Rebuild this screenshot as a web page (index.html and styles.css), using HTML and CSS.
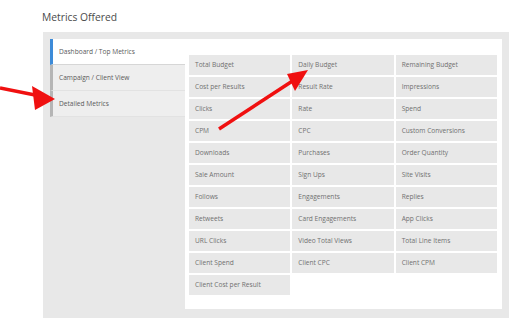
FILE: index.html
```html
<!DOCTYPE html>
<html>

<head>
    <meta charset="UTF-8" />
    <title>Metrics Offered</title>
    <link rel="stylesheet" href="styles.css">
</head>

<body>
    <h1 class="heading">Metrics Offered</h1>
    <div class="panel">
        <ul class="tabs">
            <li class="tab active">Dashboard / Top Metrics</li>
            <li class="tab">Campaign / Client View</li>
            <li class="tab">Detailed Metrics</li>
        </ul>
        <div class="content">
            <ul class="metrics">
                <li>Total Budget</li>
                <li>Daily Budget</li>
                <li>Remaining Budget</li>
                <li>Cost per Results</li>
                <li>Result Rate</li>
                <li>Impressions</li>
                <li>Clicks</li>
                <li>Rate</li>
                <li>Spend</li>
                <li>CPM</li>
                <li>CPC</li>
                <li>Custom Conversions</li>
                <li>Downloads</li>
                <li>Purchases</li>
                <li>Order Quantity</li>
                <li>Sale Amount</li>
                <li>Sign Ups</li>
                <li>Site Visits</li>
                <li>Follows</li>
                <li>Engagements</li>
                <li>Replies</li>
                <li>Retweets</li>
                <li>Card Engagements</li>
                <li>App Clicks</li>
                <li>URL Clicks</li>
                <li>Video Total Views</li>
                <li>Total Line Items</li>
                <li>Client Spend</li>
                <li>Client CPC</li>
                <li>Client CPM</li>
                <li>Client Cost per Result</li>
            </ul>
        </div>
    </div>

    <!-- annotation arrows drawn over the screenshot -->
    <svg class="arrows" width="531" height="324" viewBox="0 0 531 324">
        <line x1="0" y1="88" x2="40" y2="96" stroke="#f01010" stroke-width="3.5" />
        <polygon points="55,99 32,86 35,110" fill="#f01010" />
        <line x1="219" y1="129" x2="294" y2="80" stroke="#f01010" stroke-width="3.5" />
        <polygon points="308,70 287,74 295,91" fill="#f01010" />
    </svg>
</body>

</html>
```

FILE: styles.css
```css
* {
    margin: 0;
    padding: 0;
}

body {
    background: #fff;
    font-family: "Open Sans", "Liberation Sans", sans-serif;
    color: #555;
    position: relative;
    padding: 10px 0 0 42px;
}

.heading {
    font-size: 10.3px;
    font-weight: normal;
    color: #4a4a4a;
    height: 22px;
}

.panel {
    display: flex;
    width: 452px;
    height: 270px;
    margin-left: 1px;
    padding: 7px 7px 9px 7px;
    background: #e8e8e8;
}

.tabs {
    list-style: none;
    width: 135px;
    flex-shrink: 0;
}

.tab {
    height: 25px;
    line-height: 25px;
    padding-left: 6px;
    font-size: 6.6px;
    color: #5a5a5a;
    background: #eeeeee;
    border-left: 3px solid #b5b5b5;
    border-bottom: 1px solid #e2e2e2;
}

.tab.active {
    background: #fff;
    border-left-color: #3d8bd8;
    border-bottom-color: #d6d6d6;
}

.content {
    flex: 1;
    background: #fff;
    padding: 16px 5px 13px 4px;
}

.metrics {
    list-style: none;
    display: grid;
    grid-template-columns: repeat(3, 1fr);
    grid-auto-rows: 20px;
    gap: 2px;
}

.metrics li {
    background: #e8e8e8;
    line-height: 20px;
    padding-left: 6px;
    font-size: 6.6px;
    color: #707070;
    white-space: nowrap;
}

.arrows {
    position: absolute;
    left: 0;
    top: 0;
}
```
